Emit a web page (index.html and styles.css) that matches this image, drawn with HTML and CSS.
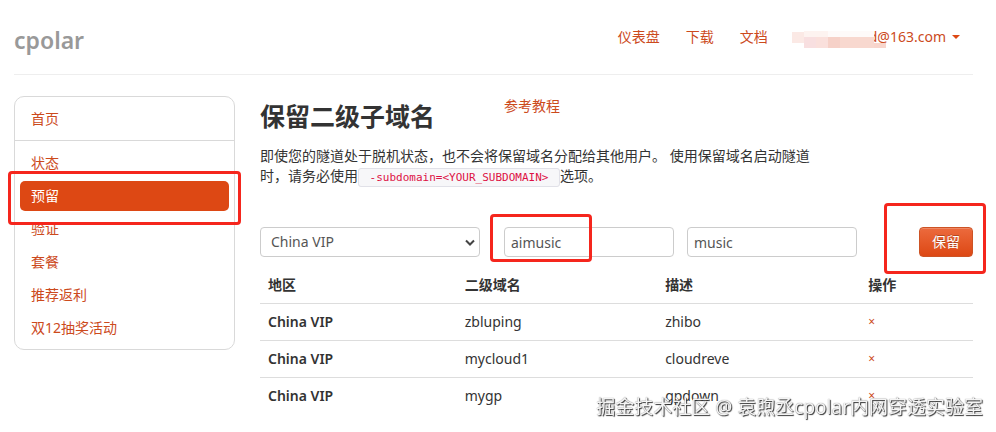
FILE: index.html
```html
<!DOCTYPE html>
<html lang="zh-CN">
<head>
<meta charset="utf-8">
<title>cpolar</title>
<link rel="stylesheet" href="styles.css">
</head>
<body>
<div class="page">
  <header class="header">
    <a class="brand" href="#">cpolar</a>
    <nav class="topnav">
      <a href="#">仪表盘</a>
      <a href="#">下载</a>
      <a href="#">文档</a>
      <a class="account" href="#">
        <span>d@163.com</span>
        <svg class="caret" viewBox="0 0 8 4" aria-hidden="true"><path d="M0 0h8L4 4z"/></svg>
        <svg class="mask" viewBox="0 0 94 18" aria-hidden="true">
          <path fill="#fbe9e5" d="M0 1h12v11H0z"/>
          <path fill="#fdf3f0" d="M12 0h24v6H12z"/>
          <path fill="#fefaf9" d="M36 0h46v6H36z"/>
          <path fill="#f8dfe0" d="M12 6h12v11H12z"/>
          <path fill="#fae0dc" d="M24 6h12v11H24z"/>
          <path fill="#f6d1c8" d="M36 6h12v11H36z"/>
          <path fill="#f8d8cf" d="M48 6h34v11H48z"/>
          <path fill="#f8d5cc" d="M82 12h12v5H82z"/>
        </svg>
      </a>
    </nav>
  </header>
  <div class="body">
    <nav class="sidebar">
      <ul class="group">
        <li><a href="#">首页</a></li>
      </ul>
      <ul class="group">
        <li><a href="#">状态</a></li>
        <li class="marked"><a class="active" href="#">预留</a><span class="marker marker-nav"></span></li>
        <li><a href="#">验证</a></li>
        <li><a href="#">套餐</a></li>
        <li><a href="#">推荐返利</a></li>
        <li><a href="#">双12抽奖活动</a></li>
      </ul>
    </nav>
    <main class="content">
      <div class="title-row">
        <h1>保留二级子域名</h1>
        <a href="#">参考教程</a>
      </div>
      <p class="intro">即使您的隧道处于脱机状态，也不会将保留域名分配给其他用户。 使用保留域名启动隧道时，请务必使用<code> -subdomain=&lt;YOUR_SUBDOMAIN&gt; </code>选项。</p>
      <form class="form">
        <div class="select-wrap">
          <select aria-label="地区"><option>China VIP</option></select>
          <svg class="chevron" viewBox="0 0 10 6" aria-hidden="true"><path d="M1 1l4 4 4-4"/></svg>
        </div>
        <div class="fields">
          <div class="marked"><input type="text" aria-label="二级域名" value="aimusic"><span class="marker marker-input"></span></div>
          <div><input type="text" aria-label="描述" value="music"></div>
        </div>
        <div class="marked submit"><button type="button">保留</button><span class="marker marker-button"></span></div>
      </form>
      <table class="table">
        <colgroup><col class="c-region"><col class="c-domain"><col class="c-desc"><col></colgroup>
        <thead>
          <tr><th scope="col">地区</th><th scope="col">二级域名</th><th scope="col">描述</th><th scope="col">操作</th></tr>
        </thead>
        <tbody>
          <tr><th scope="row">China VIP</th><td>zbluping</td><td>zhibo</td><td><a class="remove" href="#">×</a></td></tr>
          <tr><th scope="row">China VIP</th><td>mycloud1</td><td>cloudreve</td><td><a class="remove" href="#">×</a></td></tr>
          <tr><th scope="row">China VIP</th><td>mygp</td><td>gpdown</td><td><a class="remove" href="#">×</a></td></tr>
        </tbody>
      </table>
    </main>
  </div>
</div>
<div class="watermark">掘金技术社区 @ 袁煦丞cpolar内网穿透实验室</div>
</body>
</html>
```
FILE: styles.css
```css
* { box-sizing: border-box; }

body {
  margin: 0;
  background: #fff;
  color: #333;
  font: 14px/20px "Noto Sans", "Noto Sans CJK SC", sans-serif;
}

a { color: #cc4a1c; text-decoration: none; }

.page { padding: 0 23px 0 14px; }

.header {
  display: flex;
  align-items: center;
  justify-content: space-between;
  height: 75px;
  padding-top: 4px;
  border-bottom: 1px solid #eee;
}

.brand {
  padding-top: 2px;
  color: #999;
  font-size: 23px;
  font-weight: 600;
  line-height: 30px;
}

.topnav {
  display: flex;
  gap: 26px;
  padding: 0 13px 4px 0;
}

.account {
  position: relative;
  display: flex;
  align-items: center;
  gap: 6px;
  padding-left: 75px;
}

.caret { width: 8px; height: 4px; fill: #dd4814; }

.mask {
  position: absolute;
  left: -2px;
  top: 4px;
  width: 94px;
  height: 18px;
}

.body {
  display: flex;
  align-items: flex-start;
  gap: 25px;
  padding-top: 21px;
}

.sidebar {
  flex: 0 0 221px;
  border: 1px solid #d9d9d9;
  border-radius: 10px;
}

.group {
  display: grid;
  gap: 3px;
  margin: 0;
  padding: 7px 5px 6px;
  list-style: none;
}

.group + .group { border-top: 1px solid #d9d9d9; }

.group a {
  display: block;
  padding: 5px 11px;
  border-radius: 5px;
}

.group .active { background: #dd4814; color: #fff; }

.marked { position: relative; }

.marker {
  position: absolute;
  z-index: 1;
  border: 3px solid #f5261d;
  border-radius: 4px;
  pointer-events: none;
}

.marker-nav { inset: -10px -12px -14px; }
.marker-input { inset: -13px 82px -5px -14px; }
.marker-button { inset: -24px -13px -17px -35px; }

.content { flex: 1; min-width: 0; }

.title-row { display: flex; gap: 69px; }

h1 {
  margin: 0;
  font-size: 25px;
  line-height: 40px;
}

.intro {
  max-width: 560px;
  margin: 10px 0 41px;
}

code {
  padding: 2px 4px;
  border: 1px solid #e1e1e8;
  border-radius: 3px;
  background: #f7f7f9;
  color: #d14;
  font: 11px/14px "DejaVu Sans Mono", monospace;
  white-space: pre;
}

.form {
  display: flex;
  gap: 24px;
  margin-bottom: 10px;
}

.select-wrap { position: relative; flex: 0 0 220px; }

.fields { display: flex; gap: 13px; }

select, input {
  display: block;
  width: 100%;
  height: 30px;
  margin: 0;
  border: 1px solid #ccc;
  border-radius: 4px;
  background: #fff;
  color: #555;
  font: inherit;
}

select { padding: 0 10px; appearance: none; }

input { width: 170px; padding: 0 6px; }

.chevron {
  position: absolute;
  right: 5px;
  top: 12px;
  width: 10px;
  height: 7px;
  fill: none;
  stroke: #444;
  stroke-width: 2;
}

.submit { margin-left: auto; }

button {
  display: block;
  height: 30px;
  padding: 0 12px;
  border: 1px solid #cd5325;
  border-radius: 4px;
  background: linear-gradient(#ec6a3d, #dd4814);
  box-shadow: inset 0 1px 0 rgba(255, 255, 255, 0.2);
  color: #fff;
  font: inherit;
  text-shadow: 0 -1px 0 rgba(0, 0, 0, 0.25);
}

.table {
  width: 100%;
  table-layout: fixed;
  border-collapse: collapse;
}

.c-region { width: 27.6%; }
.c-domain { width: 28.1%; }
.c-desc { width: 28.5%; }

.table th, .table td {
  padding: 8px;
  text-align: left;
}

.table th { font-weight: 600; }

.table tbody tr { border-top: 1px solid #ddd; }

.remove { display: block; font-size: 12px; }

.watermark {
  position: fixed;
  right: 13px;
  bottom: 12px;
  color: #f4f4f4;
  font-size: 19px;
  line-height: 26px;
  text-shadow: 1px 1px 1px #333, 0 0 1px #777;
}
```
